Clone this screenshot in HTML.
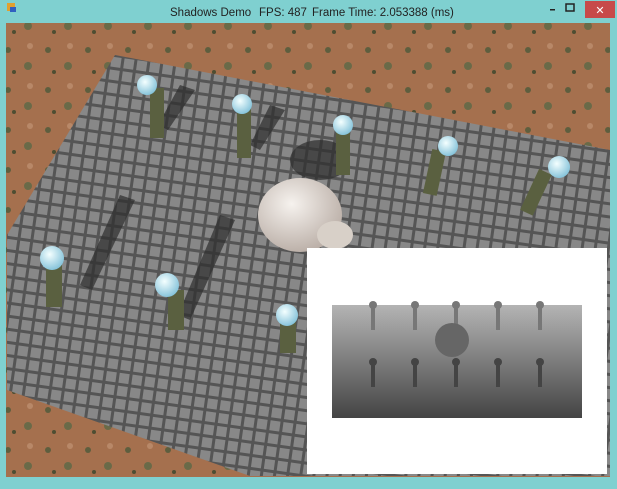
<!DOCTYPE html>
<html><head><style>
body{margin:0;width:617px;height:484px;overflow:hidden;background:#7fd0d0;font-family:"Liberation Sans",sans-serif}
</style></head><body>
<svg width="617" height="484" viewBox="0 0 617 484" xmlns="http://www.w3.org/2000/svg">
<defs>
<pattern id="g" width="13" height="13" patternUnits="userSpaceOnUse" patternTransform="rotate(8)">
<rect width="13" height="13" fill="#555"/><rect x="1.5" y="1.5" width="10" height="10" fill="#888"/>
</pattern>
<pattern id="d" width="40" height="40" patternUnits="userSpaceOnUse">
<rect width="40" height="40" fill="#a5704e"/><circle cx="8" cy="10" r="3" fill="#5e5e3e"/><circle cx="28" cy="26" r="4" fill="#6a6a48"/><circle cx="30" cy="6" r="3" fill="#b88868"/><circle cx="14" cy="32" r="2" fill="#4e4e32"/>
</pattern>
<linearGradient id="sm" x1="0" y1="0" x2="0" y2="1"><stop offset="0" stop-color="#b4b4b4"/><stop offset="1" stop-color="#444"/></linearGradient>
<radialGradient id="sk" cx="0.4" cy="0.35" r="0.7"><stop offset="0" stop-color="#f6f2ee"/><stop offset="1" stop-color="#b8aca4"/></radialGradient>
<radialGradient id="b" cx="0.4" cy="0.35" r="0.7"><stop offset="0" stop-color="#f4ffff"/><stop offset="1" stop-color="#80c0d8"/></radialGradient>
</defs>
<rect x="0" y="0" width="617" height="484" fill="#7fd0d0"/>
<g font-size="11.5" fill="#222"><text x="170" y="16">Shadows Demo</text><text x="259" y="16">FPS: 487</text><text x="312" y="16">Frame Time: 2.053388 (ms)</text></g>
<rect x="7" y="3" width="8" height="8" fill="#e0a030"/><rect x="10" y="7" width="6" height="5" fill="#3060c0"/>
<rect x="550" y="9" width="5" height="1.5" fill="#222"/>
<rect x="566" y="4" width="8" height="7" fill="none" stroke="#222" stroke-width="1.5"/>
<rect x="585" y="1" width="30" height="17" fill="#c74a4a"/>
<text x="600" y="14" font-size="11" fill="#fff" text-anchor="middle">✕</text>
<rect x="6" y="23" width="604" height="454" fill="url(#d)"/>
<polygon points="115,55 610,150 610,476 250,476 7,390 7,235" fill="url(#g)"/>
<g fill="#2e2e2e" opacity="0.7">
<polygon points="180,85 195,90 168,130 158,125"/><polygon points="270,105 285,110 260,150 250,145"/>
<polygon points="120,195 135,200 92,290 80,285"/><polygon points="220,215 235,220 190,320 178,315"/>
<ellipse cx="320" cy="160" rx="30" ry="20"/>
</g>
<g fill="#5a6040">
<rect x="150" y="88" width="14" height="50"/><rect x="237" y="108" width="14" height="50"/>
<rect x="336" y="130" width="14" height="45"/><rect x="428" y="150" width="14" height="45" transform="rotate(12 435 170)"/>
<rect x="530" y="170" width="14" height="45" transform="rotate(25 537 190)"/>
<rect x="46" y="262" width="16" height="45"/><rect x="168" y="290" width="16" height="40"/><rect x="280" y="318" width="16" height="35"/>
</g>
<g fill="url(#b)">
<circle cx="147" cy="85" r="10"/><circle cx="242" cy="104" r="10"/><circle cx="343" cy="125" r="10"/>
<circle cx="448" cy="146" r="10"/><circle cx="559" cy="167" r="11"/><circle cx="52" cy="258" r="12"/>
<circle cx="167" cy="285" r="12"/><circle cx="287" cy="315" r="11"/>
</g>
<ellipse cx="300" cy="215" rx="42" ry="37" fill="url(#sk)"/>
<ellipse cx="335" cy="235" rx="18" ry="14" fill="#d8d0c8"/>
<rect x="307" y="248" width="300" height="226" fill="#fff"/>
<rect x="332" y="305" width="250" height="113" fill="url(#sm)"/>
<g fill="#777"><circle cx="373" cy="305" r="4"/><circle cx="415" cy="305" r="4"/><circle cx="456" cy="305" r="4"/><circle cx="498" cy="305" r="4"/><circle cx="540" cy="305" r="4"/>
<rect x="371" y="305" width="4" height="25"/><rect x="413" y="305" width="4" height="25"/><rect x="454" y="305" width="4" height="25"/><rect x="496" y="305" width="4" height="25"/><rect x="538" y="305" width="4" height="25"/></g>
<g fill="#444"><circle cx="373" cy="362" r="4"/><circle cx="415" cy="362" r="4"/><circle cx="456" cy="362" r="4"/><circle cx="498" cy="362" r="4"/><circle cx="540" cy="362" r="4"/>
<rect x="371" y="362" width="4" height="25"/><rect x="413" y="362" width="4" height="25"/><rect x="454" y="362" width="4" height="25"/><rect x="496" y="362" width="4" height="25"/><rect x="538" y="362" width="4" height="25"/></g>
<ellipse cx="452" cy="340" rx="17" ry="17" fill="#666"/>
</svg>
</body></html>
